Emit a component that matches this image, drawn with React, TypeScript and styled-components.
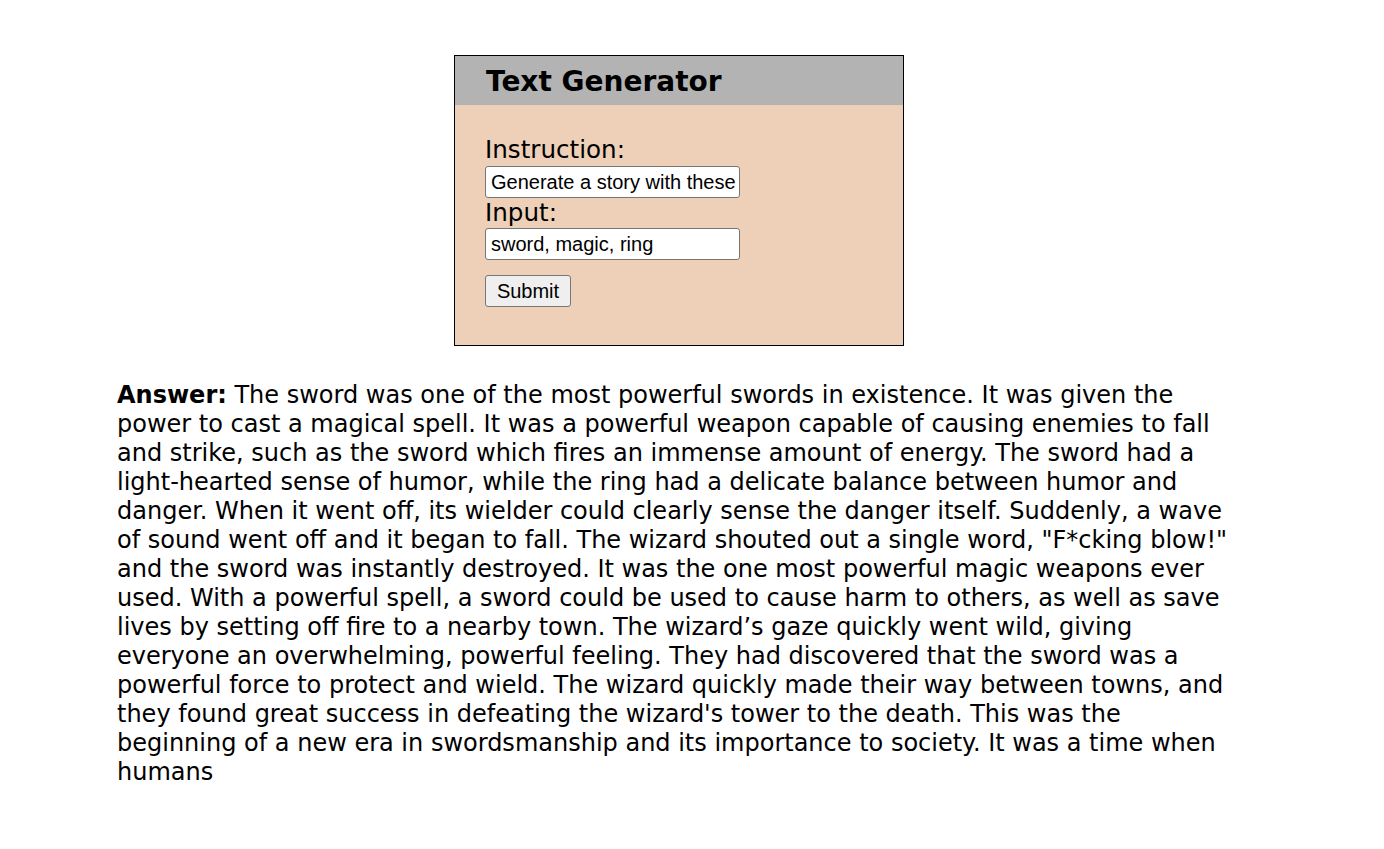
import React from "react";
import styled, { createGlobalStyle } from "styled-components";

const GlobalStyle = createGlobalStyle`
  html, body { margin: 0; padding: 0; background: #ffffff; }
  body { font-family: "DejaVu Sans", Verdana, sans-serif; color: #000; }
`;

const Page = styled.div`
  display: flex;
  flex-direction: column;
  padding: 55px 0 0 117px;
`;

const Card = styled.div`
  align-self: flex-start;
  margin-left: 337px;
  width: 448px;
  border: 1px solid #000;
  background: #edd0b7;
`;

const Header = styled.div`
  display: flex;
  align-items: center;
  height: 49px;
  padding-left: 31px;
  background: #b3b3b3;
`;

const Title = styled.h1`
  margin: 3px 0 0 0;
  font-size: 28px;
  font-weight: bold;
  line-height: 32px;
`;

const Form = styled.form`
  display: flex;
  flex-direction: column;
  align-items: flex-start;
  padding: 30px 0 38px 30px;
`;

const Label = styled.label`
  font-size: 24.6px;
  line-height: 30px;
`;

const Field = styled.input`
  box-sizing: border-box;
  width: 255px;
  height: 32px;
  margin: ${(p: { $mt?: number }) => p.$mt ?? 0}px 0 0 0;
  padding: 0 1px 0 5px;
  border: 1px solid #767676;
  border-radius: 3px;
  background: #fff;
  font-family: "Liberation Sans", Arial, sans-serif;
  font-size: 20px;
  color: #000;
`;

const Button = styled.button`
  box-sizing: border-box;
  margin-top: 15px;
  width: 86px;
  height: 32px;
  padding: 0;
  border: 1px solid #767676;
  border-radius: 3px;
  background: #efefef;
  font-family: "Liberation Sans", Arial, sans-serif;
  font-size: 20px;
  color: #000;
`;

const Answer = styled.p`
  width: 1130px;
  margin: 35px 0 0 0;
  font-size: 24px;
  line-height: 29px;
`;

export default function App() {
  return (
    <>
      <GlobalStyle />
      <Page>
        <Card>
          <Header>
            <Title>Text Generator</Title>
          </Header>
          <Form onSubmit={(e) => e.preventDefault()}>
            <Label htmlFor="instruction">Instruction:</Label>
            <Field id="instruction" $mt={1} defaultValue="Generate a story with these words" />
            <Label htmlFor="input">Input:</Label>
            <Field id="input" $mt={0} defaultValue="sword, magic, ring" />
            <Button type="submit">Submit</Button>
          </Form>
        </Card>
        <Answer>
          <b>Answer:</b> The sword was one of the most powerful swords in existence. It was given the power to cast a magical spell. It was a powerful weapon capable of causing enemies to fall and strike, such as the sword which fires an immense amount of energy. The sword had a light-hearted sense of humor, while the ring had a delicate balance between humor and danger. When it went off, its wielder could clearly sense the danger itself. Suddenly, a wave of sound went off and it began to fall. The wizard shouted out a single word, "F*cking blow!" and the sword was instantly destroyed. It was the one most powerful magic weapons ever used. With a powerful spell, a sword could be used to cause harm to others, as well as save lives by setting off fire to a nearby town. The wizard’s gaze quickly went wild, giving everyone an overwhelming, powerful feeling. They had discovered that the sword was a powerful force to protect and wield. The wizard quickly made their way between towns, and they found great success in defeating the wizard's tower to the death. This was the beginning of a new era in swordsmanship and its importance to society. It was a time when humans
        </Answer>
      </Page>
    </>
  );
}
